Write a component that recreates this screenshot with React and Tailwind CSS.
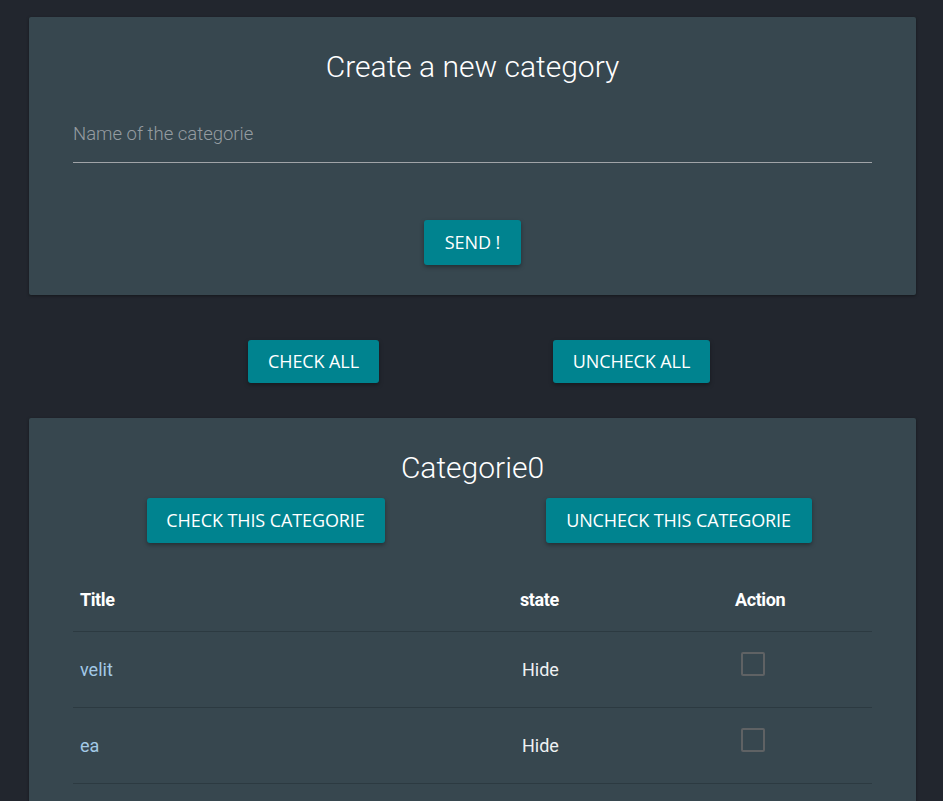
import React from "react";

const rows = [
  { title: "velit", state: "Hide" },
  { title: "ea", state: "Hide" },
];

function Btn({ children, className = "" }) {
  return (
    <button
      className={`bg-[#00838f] text-white uppercase rounded-[3px] shadow-[0_2px_4px_rgba(0,0,0,0.35)] font-['Open_Sans',sans-serif] text-[18px] tracking-[-0.1px] ${className}`}
    >
      {children}
    </button>
  );
}

export default function App() {
  return (
    <div className="min-h-screen bg-[#22262e] pt-[17px] pl-[29px] pr-[27px] font-['Roboto',sans-serif]">
      <div className="bg-[#37474f] rounded-[2px] shadow-[0_1px_3px_rgba(0,0,0,0.4)] px-[44px] pt-[32px] pb-[30px] flex flex-col items-center">
        <h1 className="text-[30px] leading-[36px] text-white font-light">
          Create a new category
        </h1>
        <div className="w-full mt-[34px] border-b border-[#a0a4a8] pb-[13px]">
          <input
            className="w-full h-[30px] bg-transparent outline-none text-[18.5px] font-light text-white placeholder:text-[#959ca1]"
            placeholder="Name of the categorie"
          />
        </div>
        <Btn className="mt-[57px] h-[45px] w-[97px]">Send !</Btn>
      </div>

      <div className="flex justify-center gap-[174px] pl-[13px] mt-[45px]">
        <Btn className="h-[43px] w-[131px]">Check all</Btn>
        <Btn className="h-[43px] w-[157px]">Uncheck all</Btn>
      </div>

      <div className="bg-[#37474f] rounded-[2px] shadow-[0_1px_3px_rgba(0,0,0,0.4)] mt-[35px] px-[44px] pt-[32px] pb-[40px]">
        <h2 className="text-[30px] leading-[36px] text-white font-light text-center">
          Categorie0
        </h2>
        <div className="flex justify-center gap-[161px] pl-[13px] mt-[12px]">
          <Btn className="h-[45px] w-[238px]">Check this categorie</Btn>
          <Btn className="h-[45px] w-[266px]">Uncheck this categorie</Btn>
        </div>
        <div className="mt-[17px]">
          <div className="grid grid-cols-[440px_215px_1fr] h-[72px] items-center pt-[8px] px-[7px] border-b border-[#2c3a41] text-[18px] font-bold text-white tracking-[-0.4px]">
            <div>Title</div>
            <div>state</div>
            <div>Action</div>
          </div>
          {rows.map((r) => (
            <div
              key={r.title}
              className="grid grid-cols-[440px_215px_1fr] h-[76px] items-center px-[7px] border-b border-[#2c3a41] text-[18px]"
            >
              <div className="text-[#a3c9e6]">{r.title}</div>
              <div className="text-[#eef1f3] pl-[2px]">{r.state}</div>
              <div className="self-start pt-[20px] pl-[6px]">
                <div className="w-[24px] h-[24px] border-2 border-[#5f6264] rounded-[2px]" />
              </div>
            </div>
          ))}
        </div>
      </div>
    </div>
  );
}
